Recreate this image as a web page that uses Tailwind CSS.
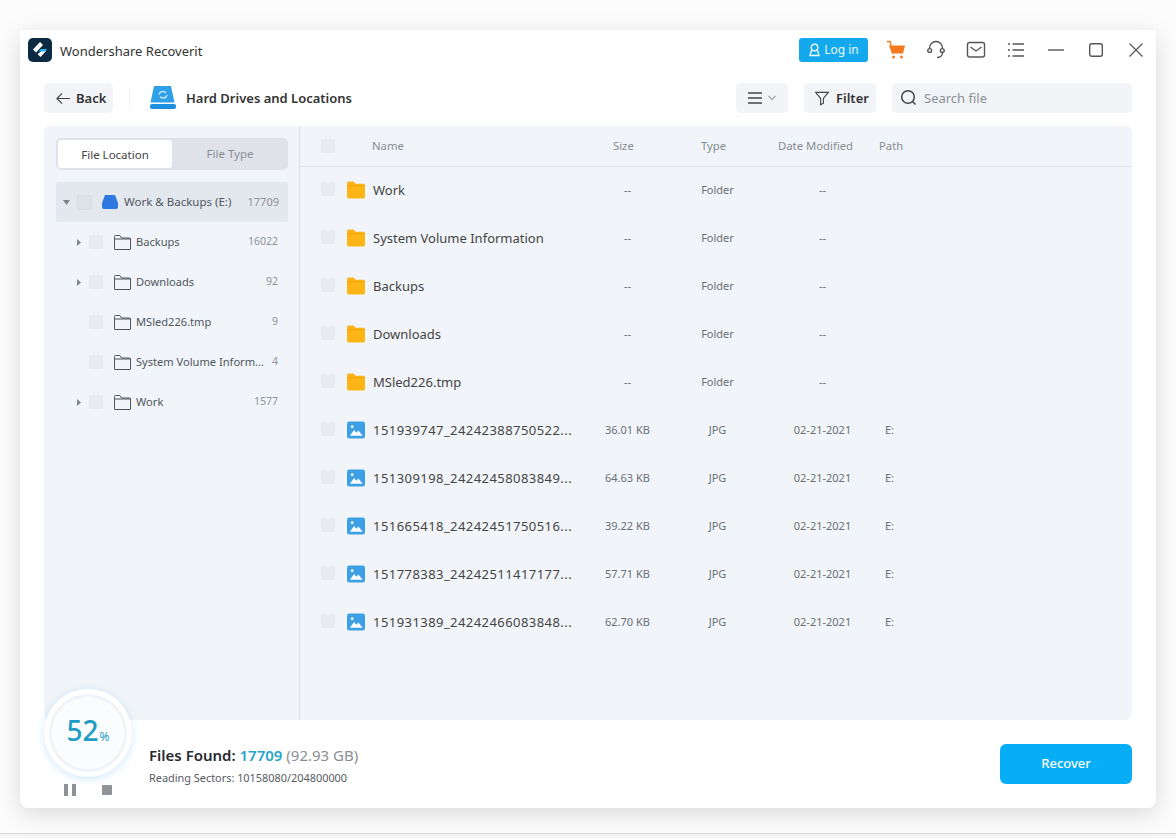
<!DOCTYPE html>
<html><head><meta charset="utf-8">
<script src="https://cdn.jsdelivr.net/npm/@tailwindcss/browser@4"></script>
</head>
<body class="m-0 bg-[#fcfcfc]">
<div class="relative w-[1176px] h-[838px] overflow-hidden bg-[#fcfcfc] font-['Noto_Sans',sans-serif] text-[#3a4149] pt-[30px]">
  <div class="absolute left-0 right-0 bottom-0 h-[5px] border-t border-[#d9d9d9] bg-[#f4f4f4]"></div>
  <div class="relative mx-[20px] h-[778px] bg-white rounded-b-[8px] shadow-[0_6px_24px_rgba(0,0,0,0.14)] flex flex-col">
    <!-- title bar -->
    <div class="h-[40px] flex items-center pl-[8px] pr-[13px] shrink-0">
      <svg class="w-[24px] h-[24px]" viewBox="0 0 24 24"><rect width="24" height="24" rx="5" fill="#0d2a44"/><path d="M12 4 5 11.500l3 3L15 7z" fill="#fff"/><path d="M9.500 16l3 3 6-6.500h-4z" fill="#fff"/><path d="M13 11h6l-2 2.500h-6.500z" fill="#29b6f6"/></svg>
      <span class="ml-[8px] pt-[3px] text-[13px] leading-none text-[#333]">Wondershare Recoverit</span>
      <div class="ml-auto flex items-center">
        <div class="w-[69px] h-[24px] bg-[#13a9ec] rounded-[3px] flex items-center justify-center gap-[3px] text-white/90 text-[12px]">
          <svg class="w-[13px] h-[14px]" viewBox="0 0 13 14" fill="none" stroke="#fff" stroke-width="1.300"><circle cx="6.500" cy="4.500" r="3.300"/><path d="M3.500 7.500c-.5 1.500-1.200 3-1.500 5h9c-.3-2-1-3.500-1.500-5"/></svg>Log in
        </div>
        <svg class="w-[20px] h-[20px] ml-[18px]" viewBox="0 0 20 20"><path d="M3 5.500h16l-2 8H6z" fill="#f47a1f"/><path d="M1 1.500h3l3 12" stroke="#f47a1f" stroke-width="1.500" fill="none"/><circle cx="7.500" cy="17" r="1.500" fill="#f47a1f"/><circle cx="15.500" cy="17" r="1.500" fill="#f47a1f"/></svg>
        <svg class="w-[20px] h-[20px] ml-[20px]" viewBox="0 0 20 20" fill="none" stroke="#555" stroke-width="1.400"><path d="M3.500 8.500v-.5a6.500 6.500 0 0 1 13 0v.5"/><circle cx="3.700" cy="10.500" r="1.900"/><circle cx="16.300" cy="10.500" r="1.900"/><path d="M16.500 12.500c0 3-2.500 5-5.500 5"/></svg>
        <svg class="w-[20px] h-[18px] ml-[20px]" viewBox="0 0 20 18" fill="none" stroke="#555" stroke-width="1.400"><rect x="1.500" y="1.500" width="17" height="14.500" rx="2"/><path d="M4.500 6l5.500 4 5.500-4"/></svg>
        <svg class="w-[18px] h-[16px] ml-[21px]" viewBox="0 0 18 16" fill="none" stroke="#555" stroke-width="1.300"><path d="M1 2h2M5.500 2H17M1 8h2M5.500 8H17M1 14h2M5.500 14H17"/></svg>
        <svg class="w-[16px] h-[16px] ml-[23px]" viewBox="0 0 16 16" stroke="#555" stroke-width="1.400"><path d="M0 8h16"/></svg>
        <svg class="w-[14px] h-[14px] ml-[25px]" viewBox="0 0 14 14" fill="none" stroke="#555" stroke-width="1.400"><rect x=".7" y=".7" width="12.600" height="12.600" rx="2"/></svg>
        <svg class="w-[14px] h-[14px] ml-[26px]" viewBox="0 0 14 14" stroke="#555" stroke-width="1.200"><path d="M.5.500l13 13M13.500.500l-13 13"/></svg>
      </div>
    </div>
    <!-- toolbar -->
    <div class="h-[30px] mt-[13px] mx-[24px] flex items-center shrink-0">
      <div class="w-[69px] h-[30px] bg-[#f2f4f7] rounded-[5px] flex items-center pl-[12px] gap-[6px] text-[13px] font-semibold text-[#333]">
        <svg class="w-[14px] h-[13px]" viewBox="0 0 15 13" fill="none" stroke="#444" stroke-width="1.300"><path d="M6.500 1 1 6.500 6.500 12M1 6.500h14"/></svg><span class="pt-[1px]">Back</span>
      </div>
      <div class="w-px h-[22px] bg-[#f0f1f3] ml-[16px]"></div>
      <svg class="w-[28px] h-[24px] ml-[19px]" viewBox="0 0 28 24"><path d="M5 0h17l3.500 16.500h-24z" fill="#2f9fe8"/><rect x="1" y="18" width="26" height="5" rx="2" fill="#1b8fe0"/><path d="M10 8.500a4 4 0 0 1 7-1.500M18 9a4 4 0 0 1-7 1.500" stroke="#bfe6fb" stroke-width="1.500" fill="none"/></svg>
      <span class="ml-[9px] pt-[1px] text-[13px] font-semibold text-[#333]">Hard Drives and Locations</span>
      <div class="ml-auto w-[52px] h-[30px] bg-[#f2f4f7] rounded-[5px] flex items-center justify-center gap-[6px]">
        <svg class="w-[14px] h-[12px]" viewBox="0 0 14 12" stroke="#444" stroke-width="1.300"><path d="M0 1h14M0 6h14M0 11h14"/></svg>
        <svg class="w-[8px] h-[6px]" viewBox="0 0 8 6" fill="none" stroke="#a3a8ae" stroke-width="1.300"><path d="M.5 1 4 4.500 7.500 1"/></svg>
      </div>
      <div class="ml-[16px] w-[72px] h-[30px] bg-[#f2f4f7] rounded-[5px] flex items-center pl-[11px] gap-[7px] text-[13px] font-semibold text-[#333]">
        <svg class="w-[14px] h-[15px]" viewBox="0 0 15 15" fill="none" stroke="#444" stroke-width="1.200"><path d="M.7 1h13.600L9 7.500V12.500L6 14.300V7.500z"/></svg><span class="pt-[1px]">Filter</span>
      </div>
      <div class="ml-[16px] w-[240px] h-[30px] bg-[#f2f4f7] rounded-[5px] flex items-center pl-[8px] gap-[6px] text-[13px] text-[#8a9098]">
        <svg class="w-[18px] h-[18px]" viewBox="0 0 18 18" fill="none" stroke="#444" stroke-width="1.500"><circle cx="8" cy="8" r="6.300"/><path d="M12.500 12.500l3 3"/></svg><span class="pt-[2px]">Search file</span>
      </div>
    </div>
    <!-- main -->
    <div class="mx-[24px] mt-[13px] h-[594px] bg-[#f1f4f8] rounded-[6px] flex shrink-0">
      <aside class="w-[255px] shrink-0 px-[12px] pt-[12px]">
        <div class="h-[32px] w-[232px] bg-[#dfe3e9] rounded-[5px] flex p-[2px] text-[11.500px]">
          <div class="w-[114px] bg-white rounded-[3px] flex items-center justify-center text-[#444] pt-[2px]">File Location</div>
          <div class="flex-1 flex items-center justify-center text-[#8b9096] pl-[2px]">File Type</div>
        </div>
        <div class="mt-[12px] h-[40px] w-[232px] bg-[#e3e7ee] rounded-[3px] flex items-center text-[11.500px]">
          <svg class="w-[7px] h-[5px] ml-[7px]" viewBox="0 0 7 5"><path d="M0 0h7L3.500 5z" fill="#7d848c"/></svg>
          <div class="w-[15px] h-[15px] ml-[7px] bg-[#dde1e8] border border-[#d8dce3] rounded-[2px]"></div>
          <svg class="w-[16px] h-[14px] ml-[10px]" viewBox="0 0 16 14"><path d="M3 0h10l3 8v4a2 2 0 0 1-2 2H2a2 2 0 0 1-2-2V8z" fill="#2e79e0"/></svg>
          <span class="ml-[6px] text-[#505760]">Work &amp; Backups (E:)</span>
          <span class="ml-auto mr-[9px] text-[11px] text-[#8d9399]">17709</span>
        </div>
        <div class="w-[232px] text-[11.100px] text-[#505760]">
          <div class="h-[40px] flex items-center">
            <svg class="w-[4px] h-[7px] ml-[21px]" viewBox="0 0 4 7"><path d="M0 0l4 3.500L0 7z" fill="#7d848c"/></svg>
            <div class="w-[14px] h-[14px] ml-[8px] bg-[#e8ebf0] rounded-[1px]"></div>
            <svg class="w-[17px] h-[15px] ml-[11px]" viewBox="0 0 17 15" fill="none" stroke="#4d5258"><path d="M.5 4V1.500a1 1 0 0 1 1-1h4.500l1.500 2.500h8a1 1 0 0 1 1 1v10a.5.5 0 0 1-.5.5H1a.5.500 0 0 1-.5-.5zM.5 4h16"/></svg>
            <span class="ml-[5px]">Backups</span><span class="ml-auto mr-[10px] text-[10.500px] text-[#8d9399]">16022</span>
          </div>
          <div class="h-[40px] flex items-center">
            <svg class="w-[4px] h-[7px] ml-[21px]" viewBox="0 0 4 7"><path d="M0 0l4 3.500L0 7z" fill="#7d848c"/></svg>
            <div class="w-[14px] h-[14px] ml-[8px] bg-[#e8ebf0] rounded-[1px]"></div>
            <svg class="w-[17px] h-[15px] ml-[11px]" viewBox="0 0 17 15" fill="none" stroke="#4d5258"><path d="M.5 4V1.500a1 1 0 0 1 1-1h4.500l1.500 2.500h8a1 1 0 0 1 1 1v10a.5.5 0 0 1-.5.5H1a.5.500 0 0 1-.5-.5zM.5 4h16"/></svg>
            <span class="ml-[5px]">Downloads</span><span class="ml-auto mr-[10px] text-[10.500px] text-[#8d9399]">92</span>
          </div>
          <div class="h-[40px] flex items-center">
            <div class="w-[14px] h-[14px] ml-[33px] bg-[#e8ebf0] rounded-[1px]"></div>
            <svg class="w-[17px] h-[15px] ml-[11px]" viewBox="0 0 17 15" fill="none" stroke="#4d5258"><path d="M.5 4V1.500a1 1 0 0 1 1-1h4.500l1.500 2.500h8a1 1 0 0 1 1 1v10a.5.5 0 0 1-.5.5H1a.5.500 0 0 1-.5-.5zM.5 4h16"/></svg>
            <span class="ml-[5px]">MSled226.tmp</span><span class="ml-auto mr-[10px] text-[10.500px] text-[#8d9399]">9</span>
          </div>
          <div class="h-[40px] flex items-center">
            <div class="w-[14px] h-[14px] ml-[33px] bg-[#e8ebf0] rounded-[1px]"></div>
            <svg class="w-[17px] h-[15px] ml-[11px]" viewBox="0 0 17 15" fill="none" stroke="#4d5258"><path d="M.5 4V1.500a1 1 0 0 1 1-1h4.500l1.500 2.500h8a1 1 0 0 1 1 1v10a.5.5 0 0 1-.5.5H1a.5.500 0 0 1-.5-.5zM.5 4h16"/></svg>
            <span class="ml-[5px]">System Volume Inform...</span><span class="ml-auto mr-[10px] text-[10.500px] text-[#8d9399]">4</span>
          </div>
          <div class="h-[40px] flex items-center">
            <svg class="w-[4px] h-[7px] ml-[21px]" viewBox="0 0 4 7"><path d="M0 0l4 3.500L0 7z" fill="#7d848c"/></svg>
            <div class="w-[14px] h-[14px] ml-[8px] bg-[#e8ebf0] rounded-[1px]"></div>
            <svg class="w-[17px] h-[15px] ml-[11px]" viewBox="0 0 17 15" fill="none" stroke="#4d5258"><path d="M.5 4V1.500a1 1 0 0 1 1-1h4.500l1.500 2.500h8a1 1 0 0 1 1 1v10a.5.5 0 0 1-.5.5H1a.5.500 0 0 1-.5-.5zM.5 4h16"/></svg>
            <span class="ml-[5px]">Work</span><span class="ml-auto mr-[10px] text-[10.500px] text-[#8d9399]">1577</span>
          </div>
        </div>
      </aside>
      <section class="flex-1 border-l border-[#d9dde3] min-w-0">
        <div class="h-[41px] border-b border-[#e3e6eb] flex items-center text-[11.300px] text-[#868c93]">
          <div class="w-[21px]"></div><div class="w-[14px] h-[14px] bg-[#e8ebf0] rounded-[1px]"></div>
          <span class="ml-[37px] w-[241px]">Name</span><span class="w-[88px]">Size</span><span class="w-[77px]">Type</span><span class="w-[101px]">Date Modified</span><span>Path</span>
        </div>
        <div class="text-[11px] text-[#6a7077]">
          <div class="h-[48px] flex items-center"><div class="w-[14px] h-[14px] ml-[21px] bg-[#e8ebf0] rounded-[1px] -mt-[4px]"></div><svg class="w-[18px] h-[18px] ml-[12px] -mt-[2px]" viewBox="0 0 19 18"><path d="M2 0h5l2 2.500h8a2 2 0 0 1 2 2V16a2 2 0 0 1-2 2H2a2 2 0 0 1-2-2V2a2 2 0 0 1 2-2z" fill="#fdb415"/><path d="M0 4.500h19" stroke="#e89e0c" stroke-width=".6"/></svg><span class="ml-[8px] w-[227px] text-[13px] text-[#444]">Work</span><span class="w-[54px] text-center pl-[1px] -mt-[1px]">--</span><span class="w-[126px] text-center pl-[1px] -mt-[1px]">Folder</span><span class="w-[84px] text-center pl-[1px] -mt-[1px]">--</span></div>
          <div class="h-[48px] flex items-center"><div class="w-[14px] h-[14px] ml-[21px] bg-[#e8ebf0] rounded-[1px] -mt-[4px]"></div><svg class="w-[18px] h-[18px] ml-[12px] -mt-[2px]" viewBox="0 0 19 18"><path d="M2 0h5l2 2.500h8a2 2 0 0 1 2 2V16a2 2 0 0 1-2 2H2a2 2 0 0 1-2-2V2a2 2 0 0 1 2-2z" fill="#fdb415"/><path d="M0 4.500h19" stroke="#e89e0c" stroke-width=".6"/></svg><span class="ml-[8px] w-[227px] text-[13px] text-[#444]">System Volume Information</span><span class="w-[54px] text-center pl-[1px] -mt-[1px]">--</span><span class="w-[126px] text-center pl-[1px] -mt-[1px]">Folder</span><span class="w-[84px] text-center pl-[1px] -mt-[1px]">--</span></div>
          <div class="h-[48px] flex items-center"><div class="w-[14px] h-[14px] ml-[21px] bg-[#e8ebf0] rounded-[1px] -mt-[4px]"></div><svg class="w-[18px] h-[18px] ml-[12px] -mt-[2px]" viewBox="0 0 19 18"><path d="M2 0h5l2 2.500h8a2 2 0 0 1 2 2V16a2 2 0 0 1-2 2H2a2 2 0 0 1-2-2V2a2 2 0 0 1 2-2z" fill="#fdb415"/><path d="M0 4.500h19" stroke="#e89e0c" stroke-width=".6"/></svg><span class="ml-[8px] w-[227px] text-[13px] text-[#444]">Backups</span><span class="w-[54px] text-center pl-[1px] -mt-[1px]">--</span><span class="w-[126px] text-center pl-[1px] -mt-[1px]">Folder</span><span class="w-[84px] text-center pl-[1px] -mt-[1px]">--</span></div>
          <div class="h-[48px] flex items-center"><div class="w-[14px] h-[14px] ml-[21px] bg-[#e8ebf0] rounded-[1px] -mt-[4px]"></div><svg class="w-[18px] h-[18px] ml-[12px] -mt-[2px]" viewBox="0 0 19 18"><path d="M2 0h5l2 2.500h8a2 2 0 0 1 2 2V16a2 2 0 0 1-2 2H2a2 2 0 0 1-2-2V2a2 2 0 0 1 2-2z" fill="#fdb415"/><path d="M0 4.500h19" stroke="#e89e0c" stroke-width=".6"/></svg><span class="ml-[8px] w-[227px] text-[13px] text-[#444]">Downloads</span><span class="w-[54px] text-center pl-[1px] -mt-[1px]">--</span><span class="w-[126px] text-center pl-[1px] -mt-[1px]">Folder</span><span class="w-[84px] text-center pl-[1px] -mt-[1px]">--</span></div>
          <div class="h-[48px] flex items-center"><div class="w-[14px] h-[14px] ml-[21px] bg-[#e8ebf0] rounded-[1px] -mt-[4px]"></div><svg class="w-[18px] h-[18px] ml-[12px] -mt-[2px]" viewBox="0 0 19 18"><path d="M2 0h5l2 2.500h8a2 2 0 0 1 2 2V16a2 2 0 0 1-2 2H2a2 2 0 0 1-2-2V2a2 2 0 0 1 2-2z" fill="#fdb415"/><path d="M0 4.500h19" stroke="#e89e0c" stroke-width=".6"/></svg><span class="ml-[8px] w-[227px] text-[13px] text-[#444]">MSled226.tmp</span><span class="w-[54px] text-center pl-[1px] -mt-[1px]">--</span><span class="w-[126px] text-center pl-[1px] -mt-[1px]">Folder</span><span class="w-[84px] text-center pl-[1px] -mt-[1px]">--</span></div>

          <div class="h-[48px] flex items-center"><div class="w-[14px] h-[14px] ml-[21px] bg-[#e8ebf0] rounded-[1px] -mt-[4px]"></div><svg class="w-[18px] h-[18px] ml-[12px] -mt-[2px]" viewBox="0 0 19 18"><rect width="19" height="18" rx="2.500" fill="#3d9fe6"/><path d="M3 15l4.500-6 2.500 3 2-2.500L16.500 15z" fill="#fff"/><circle cx="5.500" cy="5.500" r="1.500" fill="#fff"/></svg><span class="ml-[8px] w-[227px] text-[13px] tracking-[0.44px] text-[#444]">151939747_24242388750522...</span><span class="w-[54px] text-center pl-[1px] -mt-[1px]">36.01 KB</span><span class="w-[126px] text-center pl-[1px] -mt-[1px]">JPG</span><span class="w-[84px] text-center pl-[1px] -mt-[1px]">02-21-2021</span><span class="ml-[21px] -mt-[1px]">E:</span></div>
          <div class="h-[48px] flex items-center"><div class="w-[14px] h-[14px] ml-[21px] bg-[#e8ebf0] rounded-[1px] -mt-[4px]"></div><svg class="w-[18px] h-[18px] ml-[12px] -mt-[2px]" viewBox="0 0 19 18"><rect width="19" height="18" rx="2.500" fill="#3d9fe6"/><path d="M3 15l4.500-6 2.500 3 2-2.500L16.500 15z" fill="#fff"/><circle cx="5.500" cy="5.500" r="1.500" fill="#fff"/></svg><span class="ml-[8px] w-[227px] text-[13px] tracking-[0.44px] text-[#444]">151309198_24242458083849...</span><span class="w-[54px] text-center pl-[1px] -mt-[1px]">64.63 KB</span><span class="w-[126px] text-center pl-[1px] -mt-[1px]">JPG</span><span class="w-[84px] text-center pl-[1px] -mt-[1px]">02-21-2021</span><span class="ml-[21px] -mt-[1px]">E:</span></div>
          <div class="h-[48px] flex items-center"><div class="w-[14px] h-[14px] ml-[21px] bg-[#e8ebf0] rounded-[1px] -mt-[4px]"></div><svg class="w-[18px] h-[18px] ml-[12px] -mt-[2px]" viewBox="0 0 19 18"><rect width="19" height="18" rx="2.500" fill="#3d9fe6"/><path d="M3 15l4.500-6 2.500 3 2-2.500L16.500 15z" fill="#fff"/><circle cx="5.500" cy="5.500" r="1.500" fill="#fff"/></svg><span class="ml-[8px] w-[227px] text-[13px] tracking-[0.44px] text-[#444]">151665418_24242451750516...</span><span class="w-[54px] text-center pl-[1px] -mt-[1px]">39.22 KB</span><span class="w-[126px] text-center pl-[1px] -mt-[1px]">JPG</span><span class="w-[84px] text-center pl-[1px] -mt-[1px]">02-21-2021</span><span class="ml-[21px] -mt-[1px]">E:</span></div>
          <div class="h-[48px] flex items-center"><div class="w-[14px] h-[14px] ml-[21px] bg-[#e8ebf0] rounded-[1px] -mt-[4px]"></div><svg class="w-[18px] h-[18px] ml-[12px] -mt-[2px]" viewBox="0 0 19 18"><rect width="19" height="18" rx="2.500" fill="#3d9fe6"/><path d="M3 15l4.500-6 2.500 3 2-2.500L16.500 15z" fill="#fff"/><circle cx="5.500" cy="5.500" r="1.500" fill="#fff"/></svg><span class="ml-[8px] w-[227px] text-[13px] tracking-[0.44px] text-[#444]">151778383_24242511417177...</span><span class="w-[54px] text-center pl-[1px] -mt-[1px]">57.71 KB</span><span class="w-[126px] text-center pl-[1px] -mt-[1px]">JPG</span><span class="w-[84px] text-center pl-[1px] -mt-[1px]">02-21-2021</span><span class="ml-[21px] -mt-[1px]">E:</span></div>
          <div class="h-[48px] flex items-center"><div class="w-[14px] h-[14px] ml-[21px] bg-[#e8ebf0] rounded-[1px] -mt-[4px]"></div><svg class="w-[18px] h-[18px] ml-[12px] -mt-[2px]" viewBox="0 0 19 18"><rect width="19" height="18" rx="2.500" fill="#3d9fe6"/><path d="M3 15l4.500-6 2.500 3 2-2.500L16.500 15z" fill="#fff"/><circle cx="5.500" cy="5.500" r="1.500" fill="#fff"/></svg><span class="ml-[8px] w-[227px] text-[13px] tracking-[0.44px] text-[#444]">151931389_24242466083848...</span><span class="w-[54px] text-center pl-[1px] -mt-[1px]">62.70 KB</span><span class="w-[126px] text-center pl-[1px] -mt-[1px]">JPG</span><span class="w-[84px] text-center pl-[1px] -mt-[1px]">02-21-2021</span><span class="ml-[21px] -mt-[1px]">E:</span></div>
        </div>
      </section>
    </div>
    <!-- footer -->
    <div class="flex-1 flex items-center pl-[129px] pr-[24px]">
      <div class="mt-[1px]">
        <div class="text-[15px] leading-[20px] font-semibold text-[#262a30]">Files Found: <span class="text-[#2aa3c9]">17709</span> <span class="font-normal text-[#8c8f94]">(92.93 GB)</span></div>
        <div class="mt-[5px] text-[10.900px] leading-[15px] text-[#555b62]">Reading Sectors: 10158080/204800000</div>
      </div>
      <div class="ml-auto w-[132px] h-[40px] -mt-[1px] bg-[#08aef5] rounded-[6px] flex items-center justify-center text-white text-[13px] font-medium">Recover</div>
    </div>
    <!-- progress -->
    <div class="absolute left-[24px] top-[659px] w-[88px] h-[88px] rounded-full bg-white shadow-[0_2px_8px_rgba(60,170,230,0.25)] flex items-center justify-center">
      <div class="w-[78px] h-[78px] rounded-full bg-[#fbfcfd] border-[3px] border-[#f0f4f8] flex items-baseline justify-center pt-[16px] text-[#1f9cc4]">
        <span class="text-[28px] leading-[34px] font-medium">52</span><span class="text-[12px] ml-[1px]">%</span>
      </div>
    </div>
    <div class="absolute left-[44px] top-[754px] flex items-center">
      <div class="w-[4px] h-[12px] bg-[#8f9296]"></div><div class="w-[4px] h-[12px] bg-[#8f9296] ml-[4px]"></div>
      <div class="w-[10px] h-[10px] bg-[#8f9296] rounded-[1px] ml-[26px]"></div>
    </div>
  </div>
</div>
</body></html>
